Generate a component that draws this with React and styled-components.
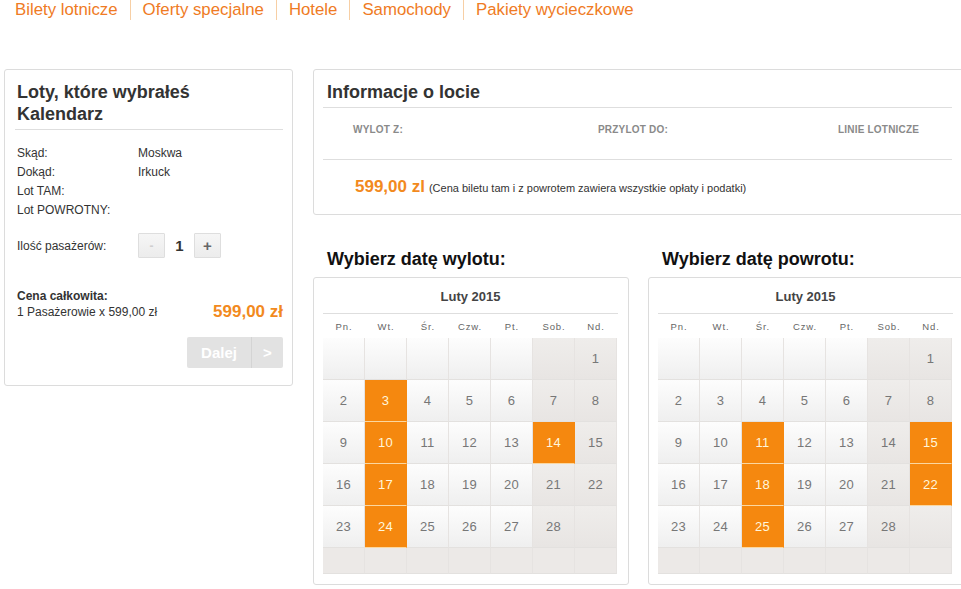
import React from 'react';
import styled, { createGlobalStyle } from 'styled-components';

const GlobalStyle = createGlobalStyle`
    html, body {
        margin: 0;
        padding: 0;
        background: #fff;
        overflow: hidden;
    }
    body {
        font-family: "Liberation Sans", Arial, sans-serif;
        color: #333;
    }
    * { box-sizing: border-box; }
`;

const ORANGE = '#f28a1e';

const Nav = styled.nav`
    display: flex;
    padding-left: 3px;
    height: 20px;
`;

const NavItem = styled.a`
    font-size: 16.8px;
    line-height: 20px;
    color: #ef7b24;
    text-decoration: none;
    padding: 0 12px;
    border-left: ${p => (p.$first ? 'none' : '1px solid #f7cfa5')};
`;

const Page = styled.div`
    display: flex;
    gap: 20px;
    padding-left: 4px;
    margin-top: 49px;
    width: 970px;
`;

const Panel = styled.section`
    background: #fff;
    border: 1px solid #dcdcdc;
    border-radius: 3px;
`;

const Sidebar = styled(Panel)`
    width: 289px;
    flex: none;
    align-self: flex-start;
    padding: 11px 9px 17px 10px;
`;

const PanelTitle = styled.h2`
    margin: 0;
    padding: 0 2px;
    font-size: 18px;
    line-height: 22px;
    font-weight: bold;
    color: #333;
`;

const Divider = styled.hr`
    margin: ${p => p.$margin || '4px 0 0'};
    border: 0;
    border-top: 1px solid #dedede;
    height: 0;
`;

const InfoList = styled.dl`
    display: grid;
    grid-template-columns: 121px auto;
    margin: 14px 0 0;
    padding-left: 2px;
    font-size: 12px;
    line-height: 19px;
    color: #333;

    dt, dd { margin: 0; }
`;

const CounterRow = styled.div`
    display: flex;
    align-items: center;
    margin-top: 13px;
    padding-left: 2px;
    font-size: 12px;
`;

const CounterLabel = styled.span`
    width: 121px;
`;

const CounterButton = styled.button`
    width: 27px;
    height: 25px;
    padding: 0;
    border: 1px solid #dedede;
    border-radius: 1px;
    background: linear-gradient(#f6f6f6, #ececec);
    font-family: inherit;
    font-size: ${p => (p.$muted ? '12px' : '15px')};
    font-weight: bold;
    color: ${p => (p.$muted ? '#cfcfcf' : '#666')};
    line-height: 1;
`;

const CounterValue = styled.span`
    width: 29px;
    text-align: center;
    font-size: 15px;
    font-weight: bold;
    color: #333;
`;

const Total = styled.div`
    display: flex;
    justify-content: space-between;
    align-items: flex-end;
    margin-top: 30px;
    padding-left: 2px;
    font-size: 12px;
    line-height: 16px;
`;

const Price = styled.span`
    color: ${ORANGE};
    font-size: 17px;
    font-weight: bold;
    line-height: ${p => (p.$tight ? '17px' : '20px')};
`;

const Actions = styled.div`
    display: flex;
    justify-content: flex-end;
    margin-top: 17px;
`;

const NextButton = styled.div`
    display: flex;
    height: 31px;
    background: #e2e2e2;
    border-radius: 2px;
    color: #fff;
    font-size: 15px;
    font-weight: bold;
`;

const NextPart = styled.span`
    display: flex;
    align-items: center;
    justify-content: center;
    width: ${p => p.$w}px;
    border-left: ${p => (p.$split ? '1px solid #d4d4d4' : 'none')};
`;

const Main = styled.div`
    width: 652px;
    flex: none;
    display: flex;
    flex-direction: column;
`;

const InfoPanel = styled(Panel)`
    padding: 11px 12px 17px 9px;
`;

const InfoTitle = styled(PanelTitle)`
    padding: 0 4px;
`;

const ColumnHeads = styled.div`
    display: grid;
    grid-template-columns: 245px 240px auto;
    padding: 16px 0 23px 30px;
    font-size: 10px;
    line-height: 12px;
    font-weight: bold;
    color: #8a8a8a;
    letter-spacing: 0.2px;
`;

const PriceRow = styled.div`
    display: flex;
    align-items: baseline;
    gap: 4px;
    padding: 17px 0 0 32px;
`;

const PriceNote = styled.span`
    font-size: 11px;
    color: #333;
`;

const CalendarRow = styled.div`
    display: flex;
    gap: 19px;
`;

const CalendarColumn = styled.div`
    width: 316px;
    flex: none;
`;

const CalendarHeading = styled.h3`
    margin: 33px 0 7px;
    padding-left: 14px;
    font-size: 18px;
    line-height: 22px;
    font-weight: bold;
    color: #111;
`;

const CalendarPanel = styled(Panel)`
    padding: 11px 10px 10px 9px;
`;

const MonthTitle = styled.div`
    text-align: center;
    font-size: 13px;
    line-height: 16px;
    font-weight: bold;
    color: #444;
`;

const Weekdays = styled.div`
    display: grid;
    grid-template-columns: repeat(7, 42px);
    height: 24px;
    align-items: center;
    font-size: 9.5px;
    letter-spacing: 0.9px;
    color: #666;
    text-align: center;
`;

const Grid = styled.div`
    display: grid;
    grid-template-columns: repeat(7, 42px);
    grid-template-rows: repeat(5, 42px) 26px;
`;

const cellBackground = p => {
    if (p.$selected) return '#f5880f';
    if (p.$filler) return '#ece9e7';
    if (p.$weekend) return 'linear-gradient(#efedeb, #e8e5e3)';
    return 'linear-gradient(#fdfdfd, #efefef)';
};

const Cell = styled.div`
    display: flex;
    align-items: center;
    justify-content: center;
    background: ${cellBackground};
    border-right: 1px solid ${p => (p.$selected ? '#f5880f' : '#e6e3e1')};
    border-bottom: 1px solid ${p => (p.$selected ? '#fbd7a0' : '#e3e1df')};
    font-size: 13px;
    letter-spacing: 0.3px;
    color: ${p => (p.$selected ? '#fff6dc' : '#777')};
`;

const WEEKDAYS = ['Pn.', 'Wt.', 'Śr.', 'Czw.', 'Pt.', 'Sob.', 'Nd.'];

// luty 2015 zaczyna się w niedzielę
const FEB_2015 = [...Array(6).fill(null), ...Array.from({ length: 28 }, (_, i) => i + 1), null];

const Calendar = ({ heading, selected }) => (
    <CalendarColumn>
        <CalendarHeading>{heading}</CalendarHeading>
        <CalendarPanel>
            <MonthTitle>Luty 2015</MonthTitle>
            <Divider $margin="8px 0 0" />
            <Weekdays>
                {WEEKDAYS.map(d => <span key={d}>{d}</span>)}
            </Weekdays>
            <Grid>
                {FEB_2015.map((day, i) => (
                    <Cell key={i} $weekend={i % 7 >= 5} $selected={selected.includes(day)}>
                        {day}
                    </Cell>
                ))}
                {WEEKDAYS.map(d => <Cell key={'f' + d} $filler />)}
            </Grid>
        </CalendarPanel>
    </CalendarColumn>
);

const App = () => {
    return (
        <>
            <GlobalStyle />
            <Nav>
                <NavItem $first href="#">Bilety lotnicze</NavItem>
                <NavItem href="#">Oferty specjalne</NavItem>
                <NavItem href="#">Hotele</NavItem>
                <NavItem href="#">Samochody</NavItem>
                <NavItem href="#">Pakiety wycieczkowe</NavItem>
            </Nav>
            <Page>
                <Sidebar>
                    <PanelTitle>Loty, które wybrałeś<br />Kalendarz</PanelTitle>
                    <Divider />
                    <InfoList>
                        <dt>Skąd:</dt><dd>Moskwa</dd>
                        <dt>Dokąd:</dt><dd>Irkuck</dd>
                        <dt>Lot TAM:</dt><dd></dd>
                        <dt>Lot POWROTNY:</dt><dd></dd>
                    </InfoList>
                    <CounterRow>
                        <CounterLabel>Ilość pasażerów:</CounterLabel>
                        <CounterButton $muted>-</CounterButton>
                        <CounterValue>1</CounterValue>
                        <CounterButton>+</CounterButton>
                    </CounterRow>
                    <Total>
                        <div>
                            <b>Cena całkowita:</b><br />
                            1 Pasażerowie x 599,00 zł
                        </div>
                        <Price $tight>599,00 zł</Price>
                    </Total>
                    <Actions>
                        <NextButton>
                            <NextPart $w={64}>Dalej</NextPart>
                            <NextPart $w={32} $split>&gt;</NextPart>
                        </NextButton>
                    </Actions>
                </Sidebar>
                <Main>
                    <InfoPanel>
                        <InfoTitle>Informacje o locie</InfoTitle>
                        <Divider />
                        <ColumnHeads>
                            <span>WYLOT Z:</span>
                            <span>PRZYLOT DO:</span>
                            <span>LINIE LOTNICZE</span>
                        </ColumnHeads>
                        <Divider $margin="0" />
                        <PriceRow>
                            <Price>599,00 zl</Price>
                            <PriceNote>(Cena biletu tam i z powrotem zawiera wszystkie opłaty i podatki)</PriceNote>
                        </PriceRow>
                    </InfoPanel>
                    <CalendarRow>
                        <Calendar heading="Wybierz datę wylotu:" selected={[3, 10, 17, 24, 14]} />
                        <Calendar heading="Wybierz datę powrotu:" selected={[11, 18, 25, 15, 22]} />
                    </CalendarRow>
                </Main>
            </Page>
        </>
    );
};

export default App;
